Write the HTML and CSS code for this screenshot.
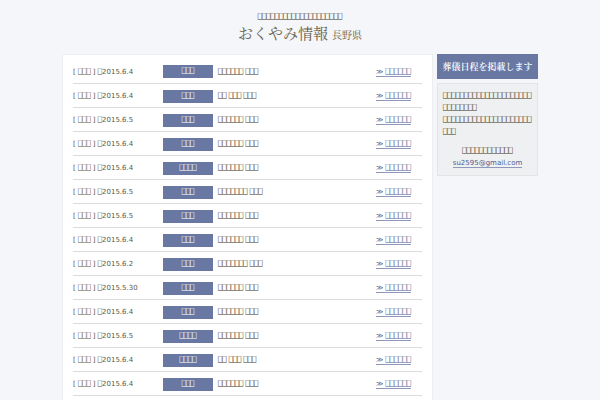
FILE: index.html
```html
<!DOCTYPE html>
<html lang="ja">
<head>
  <meta charset="UTF-8">
  <meta name="viewport" content="width=device-width, initial-scale=1.0">
  <title>おくやみ情報 長野県</title>
  <link rel="stylesheet" href="styles.css">
</head>
<body>
  <header class="site-header">
    <p class="tagline box">⎕⎕⎕⎕⎕⎕⎕⎕⎕⎕⎕⎕⎕⎕⎕⎕⎕⎕⎕⎕</p>
    <h1>おくやみ情報 <small>長野県</small></h1>
  </header>

  <div class="container">
    <main class="list">
      <table>
        <tbody>
          <tr><td class="date">[ <span class="box">⎕⎕⎕</span> ] <span class="box">⎕</span>2015.6.4</td><td class="area"><span class="label box">⎕⎕⎕</span></td><td class="name"><span class="box">⎕⎕⎕⎕⎕⎕</span> <span class="box">⎕⎕⎕</span></td><td class="more"><a href="#">≫ <span class="box">⎕⎕⎕⎕⎕⎕</span></a></td></tr>
          <tr><td class="date">[ <span class="box">⎕⎕⎕</span> ] <span class="box">⎕</span>2015.6.4</td><td class="area"><span class="label box">⎕⎕⎕</span></td><td class="name"><span class="box">⎕⎕</span> <span class="box">⎕⎕⎕</span> <span class="box">⎕⎕⎕</span></td><td class="more"><a href="#">≫ <span class="box">⎕⎕⎕⎕⎕⎕</span></a></td></tr>
          <tr><td class="date">[ <span class="box">⎕⎕⎕</span> ] <span class="box">⎕</span>2015.6.5</td><td class="area"><span class="label box">⎕⎕⎕</span></td><td class="name"><span class="box">⎕⎕⎕⎕⎕⎕</span> <span class="box">⎕⎕⎕</span></td><td class="more"><a href="#">≫ <span class="box">⎕⎕⎕⎕⎕⎕</span></a></td></tr>
          <tr><td class="date">[ <span class="box">⎕⎕⎕</span> ] <span class="box">⎕</span>2015.6.4</td><td class="area"><span class="label box">⎕⎕⎕</span></td><td class="name"><span class="box">⎕⎕⎕⎕⎕⎕</span> <span class="box">⎕⎕⎕</span></td><td class="more"><a href="#">≫ <span class="box">⎕⎕⎕⎕⎕⎕</span></a></td></tr>
          <tr><td class="date">[ <span class="box">⎕⎕⎕</span> ] <span class="box">⎕</span>2015.6.4</td><td class="area"><span class="label box">⎕⎕⎕⎕</span></td><td class="name"><span class="box">⎕⎕⎕⎕⎕⎕</span> <span class="box">⎕⎕⎕</span></td><td class="more"><a href="#">≫ <span class="box">⎕⎕⎕⎕⎕⎕</span></a></td></tr>
          <tr><td class="date">[ <span class="box">⎕⎕⎕</span> ] <span class="box">⎕</span>2015.6.5</td><td class="area"><span class="label box">⎕⎕⎕</span></td><td class="name"><span class="box">⎕⎕⎕⎕⎕⎕⎕</span> <span class="box">⎕⎕⎕</span></td><td class="more"><a href="#">≫ <span class="box">⎕⎕⎕⎕⎕⎕</span></a></td></tr>
          <tr><td class="date">[ <span class="box">⎕⎕⎕</span> ] <span class="box">⎕</span>2015.6.5</td><td class="area"><span class="label box">⎕⎕⎕</span></td><td class="name"><span class="box">⎕⎕⎕⎕⎕⎕</span> <span class="box">⎕⎕⎕</span></td><td class="more"><a href="#">≫ <span class="box">⎕⎕⎕⎕⎕⎕</span></a></td></tr>
          <tr><td class="date">[ <span class="box">⎕⎕⎕</span> ] <span class="box">⎕</span>2015.6.4</td><td class="area"><span class="label box">⎕⎕⎕</span></td><td class="name"><span class="box">⎕⎕⎕⎕⎕⎕</span> <span class="box">⎕⎕⎕</span></td><td class="more"><a href="#">≫ <span class="box">⎕⎕⎕⎕⎕⎕</span></a></td></tr>
          <tr><td class="date">[ <span class="box">⎕⎕⎕</span> ] <span class="box">⎕</span>2015.6.2</td><td class="area"><span class="label box">⎕⎕⎕</span></td><td class="name"><span class="box">⎕⎕⎕⎕⎕⎕⎕</span> <span class="box">⎕⎕⎕</span></td><td class="more"><a href="#">≫ <span class="box">⎕⎕⎕⎕⎕⎕</span></a></td></tr>
          <tr><td class="date">[ <span class="box">⎕⎕⎕</span> ] <span class="box">⎕</span>2015.5.30</td><td class="area"><span class="label box">⎕⎕⎕</span></td><td class="name"><span class="box">⎕⎕⎕⎕⎕⎕</span> <span class="box">⎕⎕⎕</span></td><td class="more"><a href="#">≫ <span class="box">⎕⎕⎕⎕⎕⎕</span></a></td></tr>
          <tr><td class="date">[ <span class="box">⎕⎕⎕</span> ] <span class="box">⎕</span>2015.6.4</td><td class="area"><span class="label box">⎕⎕⎕</span></td><td class="name"><span class="box">⎕⎕⎕⎕⎕⎕</span> <span class="box">⎕⎕⎕</span></td><td class="more"><a href="#">≫ <span class="box">⎕⎕⎕⎕⎕⎕</span></a></td></tr>
          <tr><td class="date">[ <span class="box">⎕⎕⎕</span> ] <span class="box">⎕</span>2015.6.5</td><td class="area"><span class="label box">⎕⎕⎕⎕</span></td><td class="name"><span class="box">⎕⎕⎕⎕⎕⎕</span> <span class="box">⎕⎕⎕</span></td><td class="more"><a href="#">≫ <span class="box">⎕⎕⎕⎕⎕⎕</span></a></td></tr>
          <tr><td class="date">[ <span class="box">⎕⎕⎕</span> ] <span class="box">⎕</span>2015.6.4</td><td class="area"><span class="label box">⎕⎕⎕⎕</span></td><td class="name"><span class="box">⎕⎕</span> <span class="box">⎕⎕⎕</span> <span class="box">⎕⎕⎕</span></td><td class="more"><a href="#">≫ <span class="box">⎕⎕⎕⎕⎕⎕</span></a></td></tr>
          <tr><td class="date">[ <span class="box">⎕⎕⎕</span> ] <span class="box">⎕</span>2015.6.4</td><td class="area"><span class="label box">⎕⎕⎕</span></td><td class="name"><span class="box">⎕⎕⎕⎕⎕⎕</span> <span class="box">⎕⎕⎕</span></td><td class="more"><a href="#">≫ <span class="box">⎕⎕⎕⎕⎕⎕</span></a></td></tr>
        </tbody>
      </table>
    </main>

    <aside class="side">
      <h2>葬儀日程を掲載します</h2>
      <div class="notice">
        <p class="box">⎕⎕⎕⎕⎕⎕⎕⎕⎕⎕⎕⎕⎕⎕⎕⎕⎕⎕⎕⎕⎕<br>⎕⎕⎕⎕⎕⎕⎕⎕</p>
        <p class="box">⎕⎕⎕⎕⎕⎕⎕⎕⎕⎕⎕⎕⎕⎕⎕⎕⎕⎕⎕⎕⎕<br>⎕⎕⎕</p>
        <div class="contact">
          <p class="box">⎕⎕⎕⎕⎕⎕⎕⎕⎕⎕⎕⎕</p>
          <a href="mailto:su2595@gmail.com">su2595@gmail.com</a>
        </div>
      </div>
    </aside>
  </div>
</body>
</html>
```

FILE: styles.css
```css
*, *::before, *::after {
  box-sizing: border-box;
  margin: 0;
  padding: 0;
}

body {
  display: flex;
  flex-direction: column;
  min-height: 100vh;
  font-family: "DejaVu Sans", "Noto Sans CJK JP", sans-serif;
  font-size: 7px;
  line-height: 12px;
  background: #f4f6fa;
  color: #5e563f;
}

a {
  color: #4c5c90;
  text-decoration: none;
  border-bottom: 1px solid #8d98bb;
}

.box {
  font-family: "DejaVu Sans Mono", monospace;
}

p.box,
.name {
  color: #40371c;
}

.site-header {
  padding: 11px 0 9px;
  text-align: center;

  h1 {
    font-family: "Noto Serif CJK JP", "Noto Sans CJK JP", serif;
    font-size: 15px;
    font-weight: 400;
    line-height: 20px;
    color: #665f4c;
  }

  small {
    font-size: 10px;
  }
}

.container {
  display: flex;
  flex: 1;
  gap: 4px;
  width: 80%;
  max-width: 476px;
  margin: 0 auto;
}

.list {
  flex: 1;
  padding: 4px 10px 0;
  background: #fff;
  border: 1px solid #eceef2;
  border-bottom: 0;

  table {
    width: 100%;
    border-collapse: collapse;
    table-layout: fixed;
  }

  td {
    height: 24px;
    padding-top: 2px;
    border-bottom: 1px solid #dcdcda;
    vertical-align: middle;
    white-space: nowrap;
  }

  .date {
    width: 90px;
  }

  .area {
    width: 55px;
  }

  .label {
    display: block;
    width: 50px;
    line-height: 13px;
    text-align: center;
    background: #6878a3;
    color: #fff;
  }

  .more {
    width: 46px;
  }

  .more a {
    display: inline-block;
    line-height: 8px;
  }
}

.side {
  width: 101px;

  h2 {
    margin-bottom: 4px;
    font-family: "Noto Serif CJK JP", "Noto Sans CJK JP", serif;
    font-size: 9px;
    font-weight: 600;
    line-height: 25px;
    text-align: center;
    white-space: nowrap;
    background: #6878a3;
    color: #fff;
  }
}

.notice {
  padding: 6px 5px 5px;
  background: #eff0f2;
  border: 1px solid #e2e4e8;
  white-space: nowrap;
}

.contact {
  padding: 7px 0 1px;
  text-align: center;
}
```
